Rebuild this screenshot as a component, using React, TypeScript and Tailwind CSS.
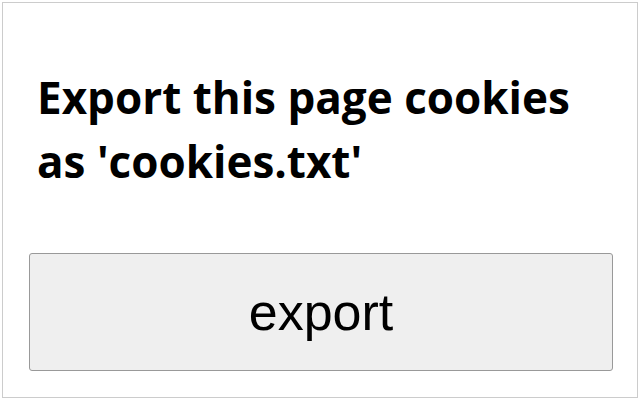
export default function App() {
  return (
    <div className="w-[640px] h-[400px] bg-white p-[2px]">
      <div className="h-full border border-[#cccccc] pl-[26px] pr-[24px] pt-[62px]">
        <h2 className="ml-[8px] text-[44px] leading-[64px] font-bold text-black font-['Open_Sans',sans-serif]">
          Export this page cookies
          <br />
          as 'cookies.txt'
        </h2>
        <button className="mt-[60px] w-full h-[118px] bg-[#efefef] border border-[#999999] rounded-[3px] text-[52px] text-black font-['Liberation_Sans',Arial,sans-serif]">
          export
        </button>
      </div>
    </div>
  )
}
